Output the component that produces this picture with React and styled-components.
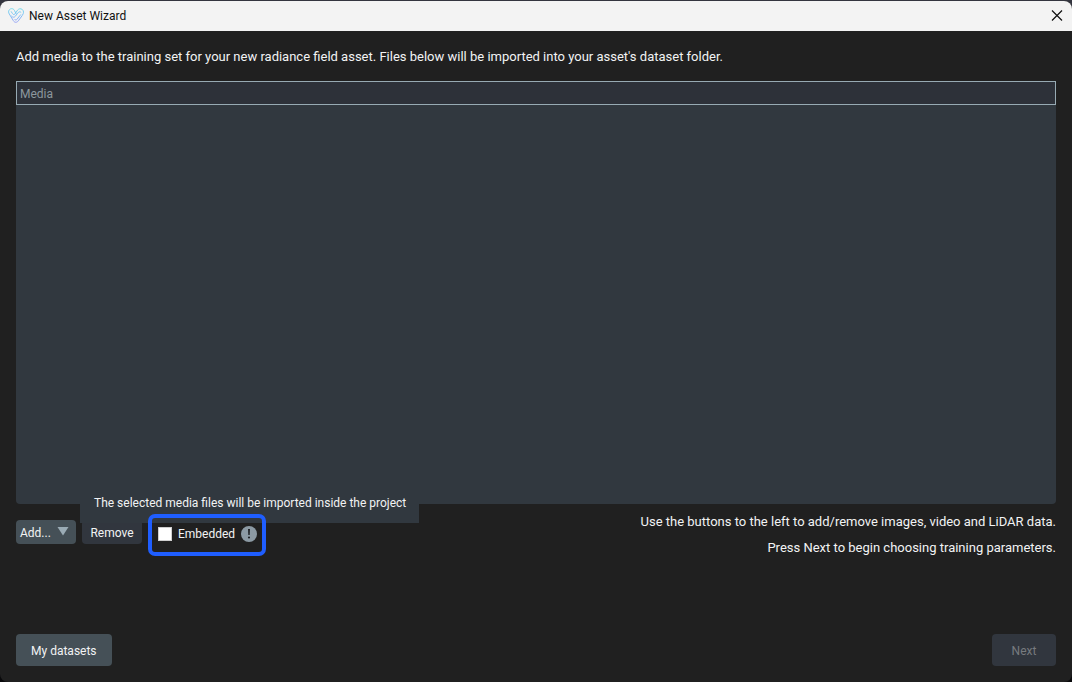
import React from "react";
import styled, { createGlobalStyle } from "styled-components";

const GlobalStyle = createGlobalStyle`
  *, *::before, *::after { box-sizing: border-box; }
  body {
    margin: 0;
    background: #09090b;
    font-family: "Segoe UI", Roboto, "Open Sans", sans-serif;
    font-size: 12px;
    line-height: 18px;
    color: #f2f3f4;
  }
  button, input { font: inherit; color: inherit; }
`;

const Backdrop = styled.div`
  min-height: 100vh;
  display: flex;
  padding-top: 1px;
  background: linear-gradient(#34353f 0 16px, #09090b 16px);
`;

const Window = styled.section`
  flex: 1;
  min-width: 0;
  display: flex;
  flex-direction: column;
  border-radius: 8px;
  overflow: hidden;
  background: #202020;
`;

const TitleBar = styled.header`
  display: flex;
  align-items: center;
  gap: 5px;
  height: 30px;
  padding: 0 8px;
  background: #f3f3f3;
  color: #111;
`;

const Title = styled.h1`
  flex: 1;
  margin: 0;
  font-size: 12px;
  font-weight: 400;
`;

const CloseButton = styled.button`
  display: flex;
  align-items: center;
  justify-content: center;
  width: 14px;
  height: 20px;
  padding: 0;
  border: 0;
  background: transparent;
`;

const Content = styled.main`
  flex: 1;
  display: flex;
  flex-direction: column;
  padding: 16px;
`;

const Intro = styled.p`
  margin: 0 0 14px;
  font-size: 13px;
  line-height: 20px;
`;

const MediaTable = styled.table`
  width: 100%;
  border-collapse: separate;
  border-spacing: 0;
`;

const MediaHeading = styled.th`
  height: 24px;
  padding: 2px 3px 0;
  border: 1px solid #97aab3;
  background: #2d3139;
  color: #8c979d;
  font-weight: 400;
  text-align: left;
`;

const MediaPanel = styled.div`
  flex: 1;
  min-height: 160px;
  border-radius: 0 0 4px 4px;
  background: #31383f;
`;

const Actions = styled.div`
  display: flex;
  justify-content: space-between;
  align-items: flex-start;
  height: 130px;
`;

const ActionGroup = styled.div`
  display: flex;
  align-items: flex-start;
  gap: 6px;
  padding-top: 10px;
`;

const SmallButton = styled.button`
  display: flex;
  align-items: center;
  justify-content: ${(p) => (p.$menu ? "space-between" : "center")};
  width: 60px;
  height: 24px;
  margin-top: 6px;
  padding: ${(p) => (p.$menu ? "2px 7px 0 4px" : "2px 0 0")};
  border: 0;
  border-radius: 4px;
  background: ${(p) => (p.$menu ? "#455057" : "#31363e")};
`;

const MenuArrow = styled.svg`
  margin-bottom: 2px;
`;

const EmbedOption = styled.div`
  position: relative;
  width: 118px;
`;

const EmbedFrame = styled.div`
  position: relative;
  z-index: 2;
  display: flex;
  align-items: center;
  justify-content: space-between;
  height: 42px;
  padding: 0 5px 2px 6px;
  border: 4px solid #1f5eff;
  border-radius: 7px;
`;

const Label = styled.label`
  display: flex;
  align-items: center;
  gap: 6px;
  line-height: 20px;
`;

const Checkbox = styled.input`
  appearance: none;
  width: 14px;
  height: 14px;
  margin: 0;
  border: 1px solid #cfcfcf;
  background: #fff;
  &:checked { background: #1f5eff; }
`;

const Tooltip = styled.div`
  position: absolute;
  z-index: 1;
  left: -68px;
  bottom: 33px;
  padding: 12px 13px 11px 14px;
  background: #31383f;
  white-space: nowrap;
`;

const Help = styled.div`
  padding-top: 5px;
  font-size: 13px;
  line-height: 26px;
  text-align: right;
`;

const Footer = styled.footer`
  display: flex;
  justify-content: space-between;
`;

const FooterButton = styled.button`
  height: 32px;
  min-width: 64px;
  padding: 2px 15px 0;
  border: 0;
  border-radius: 4px;
  background: #455057;
  &:disabled { background: #31363e; color: #777b7e; }
`;

const BadgeIcon = styled.svg`
  flex: none;
`;

function Logo() {
  return (
    <svg width="16" height="16" viewBox="0 0 16 16" fill="none" aria-hidden="true">
      <defs>
        <linearGradient id="brand" x1="8" y1="0" x2="8" y2="16" gradientUnits="userSpaceOnUse">
          <stop stopColor="#74dcea" />
          <stop offset="0.5" stopColor="#82bdf5" />
          <stop offset="1" stopColor="#9d9cf5" />
        </linearGradient>
      </defs>
      <g stroke="url(#brand)" strokeWidth="1" strokeLinecap="round" strokeLinejoin="round">
        <path d="M8 5.5 6.4 2.4C5.3.2 2.6.2 1.3 1.8.2 3.2.5 4.6 1.3 6l4 6.6c1.2 2.2 3.6 2.2 5 .3l4-5.500c1.6-2.3 1.6-4.4 0-5.900-1.6-1.3-3.6-.8-4.8.7L7 5.9c-.8 1-1.9.8-2.5-.3L3.3 3.7" />
        <path d="M12.9 4.2c-1.1-1-2.3-.3-3.2.9L7.3 8.3c-1 1.3-2.7 1.2-3.7-.1M12.6 6.8l-3.8 4.7c-.7.8-1.6.7-2.2-.2" />
      </g>
    </svg>
  );
}

function InfoIcon() {
  return (
    <BadgeIcon width="16" height="16" viewBox="0 0 16 16" role="img" aria-label="Information">
      <circle cx="8" cy="8" r="8" fill="#8c9aa4" />
      <path d="M7 3h2l-.3 6H7.3z" fill="#202428" />
      <circle cx="8" cy="11.5" r="1.1" fill="#202428" />
    </BadgeIcon>
  );
}

export default function App() {
  return (
    <Backdrop>
      <GlobalStyle />
      <Window>
        <TitleBar>
          <Logo />
          <Title>New Asset Wizard</Title>
          <CloseButton aria-label="Close">
            <svg width="12" height="12" viewBox="0 0 12 12" aria-hidden="true">
              <path d="M1 .5l10 10M11 .5L1 10.5" stroke="#111" strokeWidth="1.2" />
            </svg>
          </CloseButton>
        </TitleBar>
        <Content>
          <Intro>
            Add media to the training set for your new radiance field asset. Files below will be
            imported into your asset's dataset folder.
          </Intro>
          <MediaTable>
            <thead>
              <tr>
                <MediaHeading scope="col">Media</MediaHeading>
              </tr>
            </thead>
          </MediaTable>
          <MediaPanel />
          <Actions>
            <ActionGroup>
              <SmallButton $menu aria-haspopup="menu">
                Add...
                <MenuArrow width="12" height="12" viewBox="0 0 12 12" aria-hidden="true">
                  <path d="M.5 1h11L6 9.5z" fill="#9aabb5" />
                </MenuArrow>
              </SmallButton>
              <SmallButton>Remove</SmallButton>
              <EmbedOption>
                <EmbedFrame>
                  <Label>
                    <Checkbox type="checkbox" aria-describedby="embed-tip" />
                    Embedded
                  </Label>
                  <InfoIcon />
                </EmbedFrame>
                <Tooltip role="tooltip" id="embed-tip">
                  The selected media files will be imported inside the project
                </Tooltip>
              </EmbedOption>
            </ActionGroup>
            <Help>
              Use the buttons to the left to add/remove images, video and LiDAR data.
              <br />
              Press Next to begin choosing training parameters.
            </Help>
          </Actions>
          <Footer>
            <FooterButton>My datasets</FooterButton>
            <FooterButton disabled>Next</FooterButton>
          </Footer>
        </Content>
      </Window>
    </Backdrop>
  );
}
